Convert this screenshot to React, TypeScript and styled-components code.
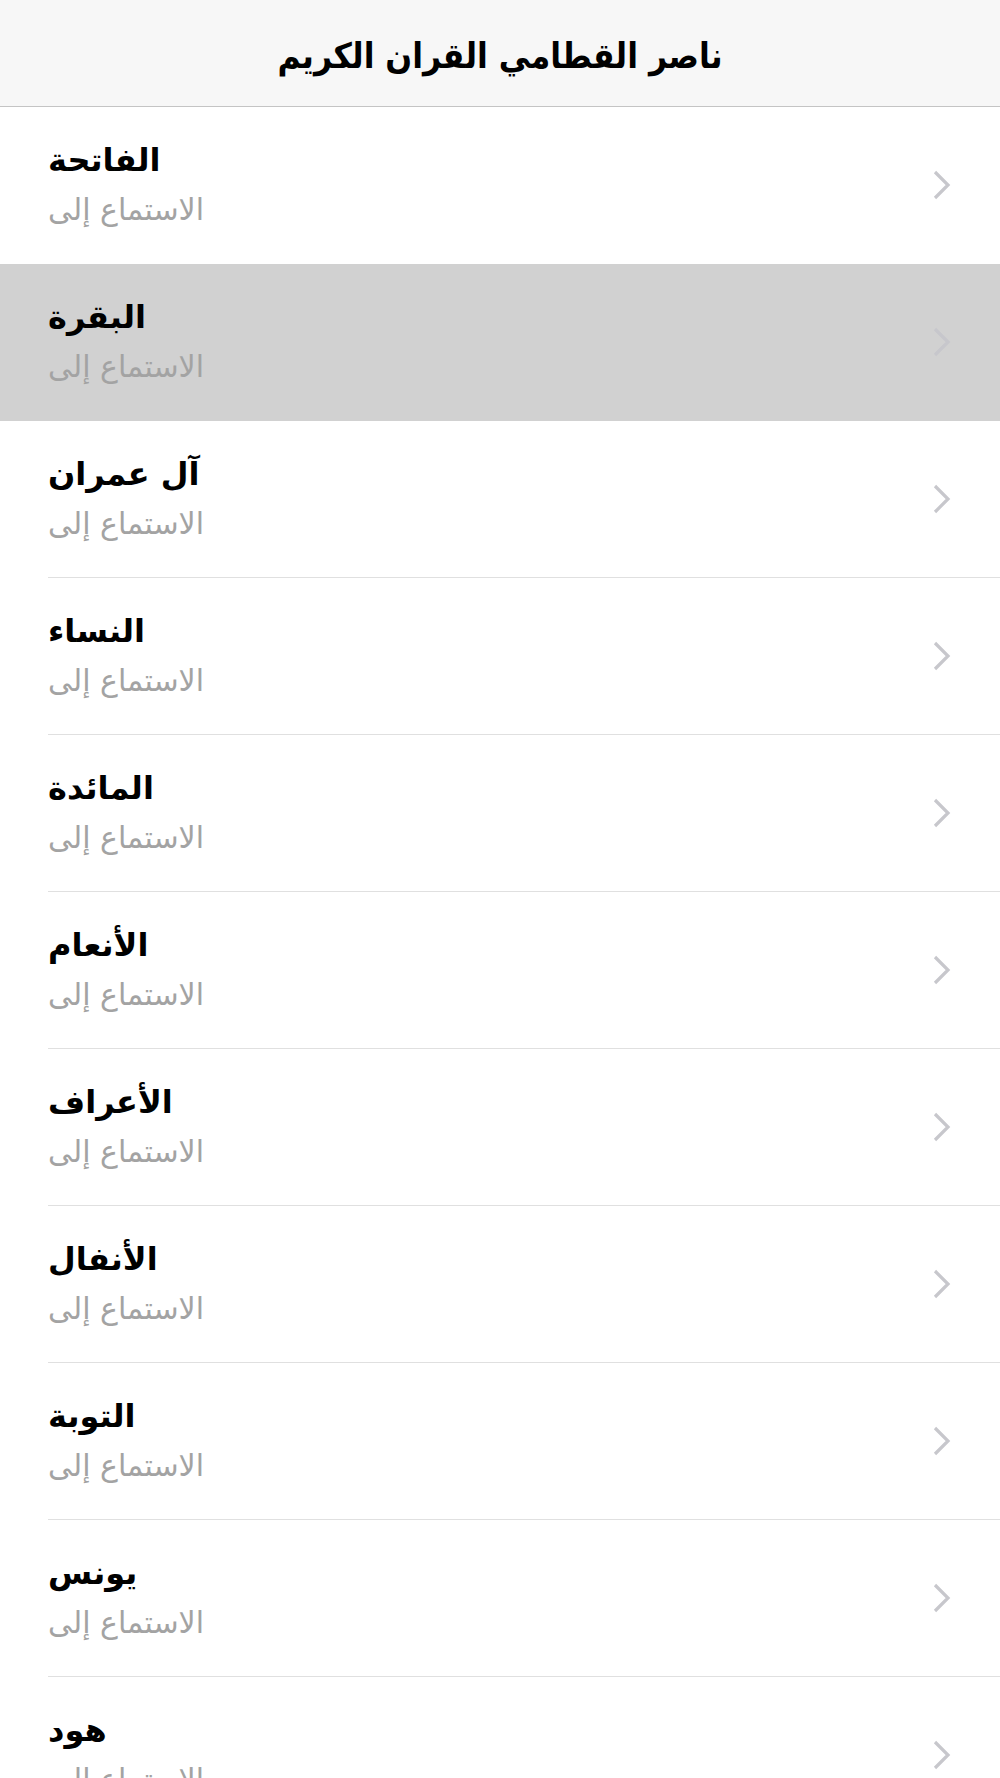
import styled, { createGlobalStyle } from 'styled-components';

const SURAHS = [
  'الفاتحة',
  'البقرة',
  'آل عمران',
  'النساء',
  'المائدة',
  'الأنعام',
  'الأعراف',
  'الأنفال',
  'التوبة',
  'يونس',
  'هود',
];

const SELECTED = 1;

const GlobalStyle = createGlobalStyle`
  html, body {
    margin: 0;
    padding: 0;
    background: #ffffff;
  }
  body {
    height: 1778px;
    overflow: hidden;
    font-family: "DejaVu Sans", "Noto Sans", sans-serif;
  }
`;

function Chevron() {
  return (
    <StyledChevron width="20" height="32" viewBox="0 0 20 32">
      <polyline points="3,3 16,16 3,29" fill="none" stroke="#c7c7cc" strokeWidth="3.2" />
    </StyledChevron>
  );
}

type SurahRowProps = { name: string; selected: boolean; hideSeparator: boolean };

function SurahRow({ name, selected, hideSeparator }: SurahRowProps) {
  return (
    <Row selected={selected}>
      <RowInner hideSeparator={hideSeparator}>
        <TextBlock>
          <Title>{name}</Title>
          <Subtitle>الاستماع إلى</Subtitle>
        </TextBlock>
        <Chevron />
      </RowInner>
    </Row>
  );
}

export default function App() {
  return (
    <Screen>
      <GlobalStyle />
      <NavBar>
        <NavTitle>ناصر القطامي القران الكريم</NavTitle>
      </NavBar>
      <List>
        {SURAHS.map((name, i) => (
          <SurahRow
            key={name}
            name={name}
            selected={i === SELECTED}
            hideSeparator={i === SELECTED || i === SELECTED - 1}
          />
        ))}
      </List>
    </Screen>
  );
}

const Screen = styled.div`
  width: 1000px;
  height: 1778px;
  overflow: hidden;
  background: #ffffff;
`;

const NavBar = styled.header`
  height: 106px;
  display: flex;
  align-items: center;
  justify-content: center;
  background: #f7f7f7;
  border-bottom: 1px solid #c4c4c4;
`;

const NavTitle = styled.h1`
  margin: 0;
  padding-top: 6px;
  font-family: "DejaVu Sans Condensed", "DejaVu Sans", sans-serif;
  font-stretch: condensed;
  font-size: 35px;
  font-weight: 700;
  color: #000000;
`;

const List = styled.div`
  display: flex;
  flex-direction: column;
`;

const Row = styled.div<{ selected: boolean }>`
  height: 157px;
  padding-left: 48px;
  box-sizing: border-box;
  background: ${({ selected }) => (selected ? '#d1d1d1' : '#ffffff')};
`;

const RowInner = styled.div<{ hideSeparator: boolean }>`
  height: 100%;
  box-sizing: border-box;
  display: flex;
  align-items: center;
  justify-content: space-between;
  padding-right: 48px;
  border-bottom: 1px solid ${({ hideSeparator }) => (hideSeparator ? 'transparent' : '#e0e0e0')};
`;

const TextBlock = styled.div`
  display: flex;
  flex-direction: column;
  align-items: flex-start;
  gap: 10px;
`;

const Title = styled.div`
  font-size: 32px;
  line-height: 40px;
  font-weight: 700;
  color: #000000;
`;

const Subtitle = styled.div`
  font-size: 30px;
  line-height: 40px;
  color: #a3a3a3;
`;

const StyledChevron = styled.svg`
  display: block;
  flex-shrink: 0;
`;
